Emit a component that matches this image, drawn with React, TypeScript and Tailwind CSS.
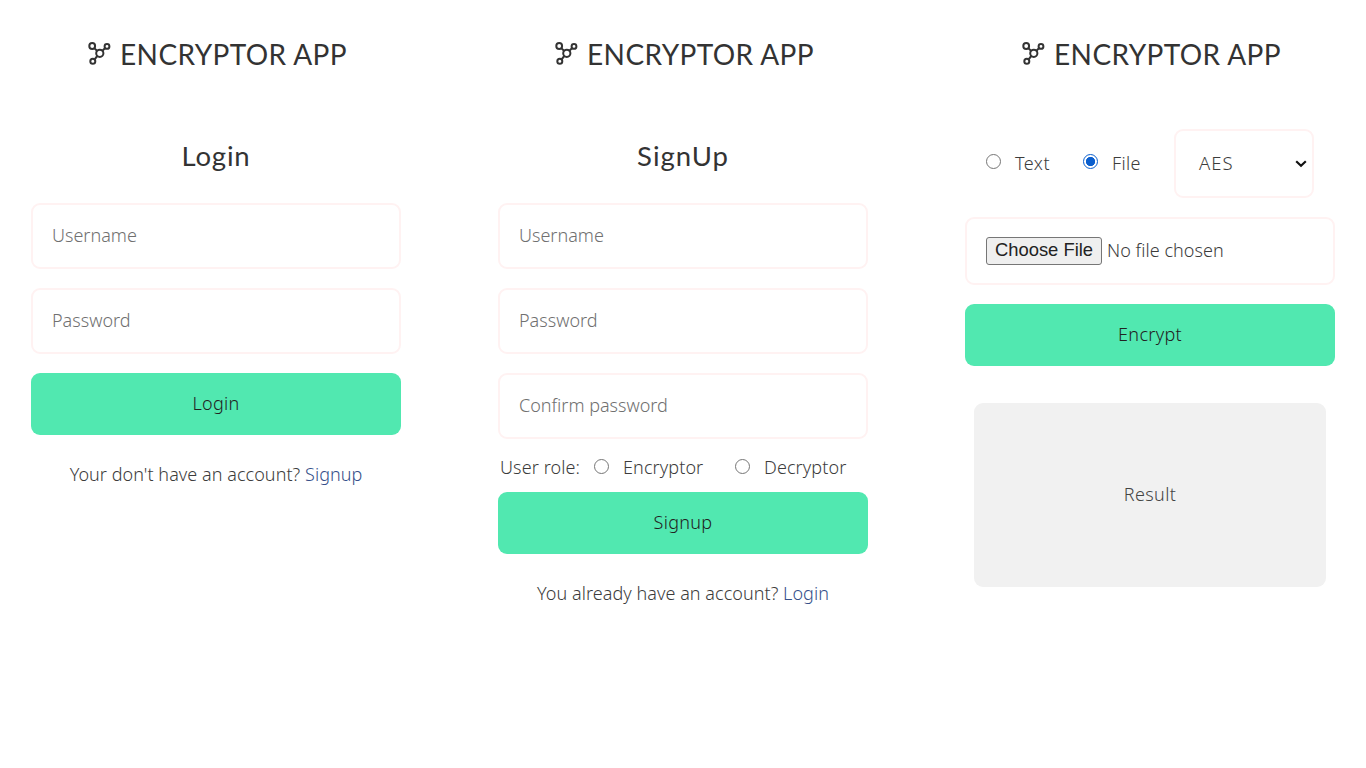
import React, { useState } from "react";

function Logo() {
  return (
    <svg width="24" height="24" viewBox="0 0 24 24" fill="none" stroke="#333" strokeWidth="2" className="mr-[9px] mb-[3px] shrink-0">
      <circle cx="5.2" cy="5" r="2.9" />
      <circle cx="20" cy="5.4" r="2.4" />
      <circle cx="12.8" cy="12.3" r="3.6" />
      <circle cx="5.8" cy="20.3" r="2.5" />
      <path d="M7.3 7.1l2.7 2.6M18.2 7.1l-2.8 2.6M10.3 15l-2.9 3.6" />
    </svg>
  );
}

function Brand() {
  return (
    <header className="flex h-[110px] items-center justify-center pb-[2px] pl-[2px] font-['Lato','Noto_Sans',sans-serif] text-[28px] font-normal tracking-[0.4px] text-[#333]">
      <Logo />
      <h1>ENCRYPTOR APP</h1>
    </header>
  );
}

function Field({ placeholder, type = "text" }: { placeholder: string; type?: string }) {
  return (
    <input
      type={type}
      placeholder={placeholder}
      className="mb-[19.2px] block h-[66px] w-full rounded-[9px] border-2 border-[#fff2f2] px-[19px] pb-[2px] outline-none placeholder:text-[#707070]"
    />
  );
}

function Button({ children }: { children: string }) {
  return (
    <button className="block h-[62px] w-full rounded-[9px] bg-[#51e8b0] pb-px tracking-[0.3px] text-[#222]">{children}</button>
  );
}

function Radio({ label, name, checked, onChange, className }: { label: string; name: string; checked: boolean; onChange: () => void; className: string }) {
  return (
    <label className={`flex items-center ${className}`}>
      <input
        type="radio"
        name={name}
        checked={checked}
        onChange={onChange}
        className="mr-[14px] mb-[3px] size-[15px] appearance-none rounded-full border border-[#767676] bg-white checked:border-[#0b5fce] checked:bg-[radial-gradient(circle,#0b5fce_4.3px,#fff_5px)]"
      />
      {label}
    </label>
  );
}

export default function App() {
  const [role, setRole] = useState("");
  const [mode, setMode] = useState("file");
  return (
    <main className="flex h-screen gap-[97px] overflow-hidden bg-white pl-[31px] font-['Noto_Sans',sans-serif] text-[18px] font-light text-[#3c3c3c]">
      <section className="w-[370px] shrink-0">
        <Brand />
        <h2 className="flex h-[93px] items-center justify-center pb-px font-['Lato','Noto_Sans',sans-serif] text-[27.5px] font-normal tracking-[0.8px] text-[#333]">Login</h2>
        <Field placeholder="Username" />
        <Field placeholder="Password" type="password" />
        <Button>Login</Button>
        <p className="mt-[26px] text-center tracking-[0.05px]">
          Your don't have an account? <a className="text-[#36508a]">Signup</a>
        </p>
      </section>

      <section className="w-[370px] shrink-0">
        <Brand />
        <h2 className="flex h-[93px] items-center justify-center pb-px font-['Lato','Noto_Sans',sans-serif] text-[27.5px] font-normal tracking-[1px] text-[#333]">SignUp</h2>
        <Field placeholder="Username" />
        <Field placeholder="Password" type="password" />
        <Field placeholder="Confirm password" type="password" />
        <div className="flex h-[33px] items-center pb-[15px] pl-[2px] tracking-[0.1px]">
          <span className="w-[94px]">User role:</span>
          <Radio label="Encryptor" name="role" checked={role === "encryptor"} onChange={() => setRole("encryptor")} className="w-[141px]" />
          <Radio label="Decryptor" name="role" checked={role === "decryptor"} onChange={() => setRole("decryptor")} className="" />
        </div>
        <Button>Signup</Button>
        <p className="mt-[26px] text-center tracking-[0.05px]">
          You already have an account? <a className="text-[#36508a]">Login</a>
        </p>
      </section>

      <section className="w-[370px] shrink-0">
        <Brand />
        <div className="flex items-center pt-[19px] pl-[21px]">
          <Radio label="Text" name="mode" checked={mode === "text"} onChange={() => setMode("text")} className="w-[97px] pb-px tracking-[0.5px]" />
          <Radio label="File" name="mode" checked={mode === "file"} onChange={() => setMode("file")} className="w-[91px] pb-px tracking-[0.3px]" />
          <button className="flex h-[69px] w-[140px] items-center justify-between rounded-[9px] border-2 border-[#fff2f2] pr-[5px] pb-px pl-[23px] text-[18.5px] tracking-[1px]">
            AES
            <svg width="12" height="8" viewBox="0 0 12 8" fill="none" stroke="#111" strokeWidth="2.2" className="mt-px">
              <path d="M1.2 1.3l4.8 4.4 4.8-4.4" />
            </svg>
          </button>
        </div>
        <label className="mt-[19px] mb-[19px] flex h-[68px] items-center rounded-[9px] border-2 border-[#fff2f2] pl-[19px]">
          <span className="mr-[5px] flex h-[28px] w-[116px] items-center justify-center rounded-[3px] border border-[#767676] bg-[#efefef] pb-px font-['Liberation_Sans',sans-serif] text-[18.4px] leading-none font-normal text-[#222]">
            Choose File
          </span>
          <span className="pb-[2px] tracking-[0.05px]">No file chosen</span>
        </label>
        <Button>Encrypt</Button>
        <div className="mx-[9px] mt-[37px] flex h-[184px] items-center justify-center rounded-[9px] bg-[#f1f1f1] pb-[2px] tracking-[0.4px] text-[#444]">Result</div>
      </section>
    </main>
  );
}
